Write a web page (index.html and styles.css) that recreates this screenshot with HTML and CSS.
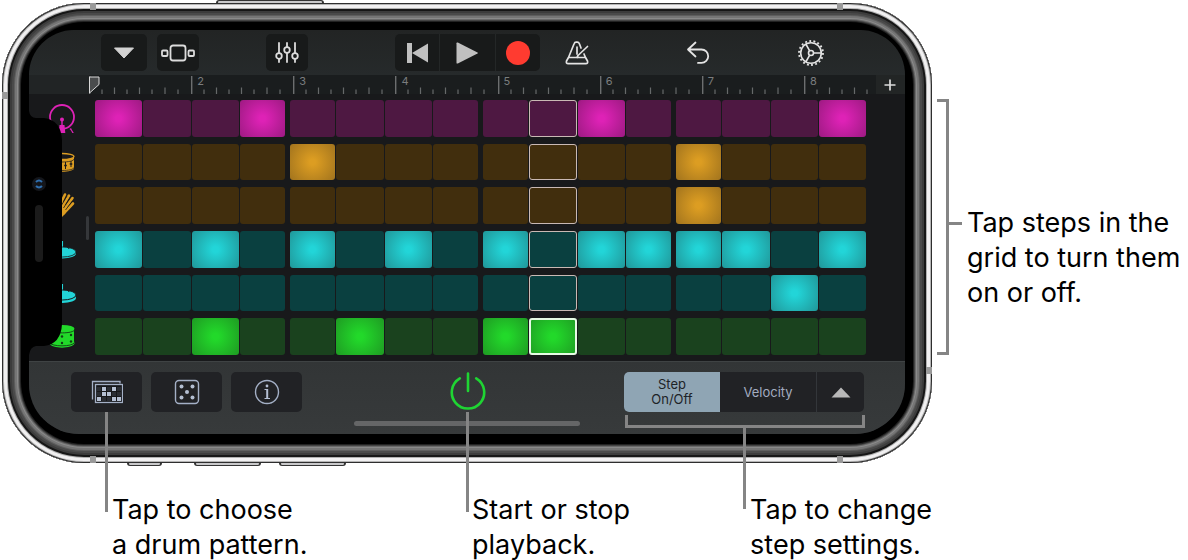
FILE: index.html
```html
<!DOCTYPE html>
<html lang="en">
<head>
    <meta charset="UTF-8">
    <meta name="viewport" content="width=device-width, initial-scale=1.0">
    <title>Beat Sequencer</title>
    <link rel="stylesheet" href="styles.css">
</head>
<body>
    <svg class="symbols" aria-hidden="true">
        <symbol id="ticks" viewBox="0 0 102 19">
            <path d="M.7 1v18" stroke="#6c6e6f" stroke-width="1.4"/>
            <path d="M13 14.500v4.500M38 14.500v4.500M63 14.500v4.500M89 14.500v4.500M25.500 12.500v6.500M50.500 12.500v6.500M76 12.500v6.500" stroke="#66696a" stroke-width="1.200"/>
        </symbol>
    </svg>

    <main class="figure">
        <div class="phone">
            <span class="side-key key-power"></span>
            <span class="side-key key-mute"></span>
            <span class="side-key key-up"></span>
            <span class="side-key key-down"></span>
            <span class="band band-tl"></span>
            <span class="band band-tr"></span>
            <span class="band band-bl"></span>
            <span class="band band-br"></span>
            <span class="band band-left"></span>
            <span class="band band-right"></span>

            <div class="screen">
                <header class="toolbar">
                    <button class="tool wide" aria-label="Navigation">
                        <svg width="22" height="12" viewBox="0 0 22 12"><path d="M1.500 1h19L11 11z" fill="#d2d2d2" stroke="#d2d2d2" stroke-linejoin="round"/></svg>
                    </button>
                    <button class="tool second" aria-label="Browser">
                        <svg width="34" height="18" viewBox="0 0 34 18" fill="none" stroke="#dcdcdc" stroke-width="1.800"><rect x="9.500" y="1.500" width="15" height="15" rx="2.500"/><rect x="1" y="6.500" width="5.500" height="5.500" rx="1"/><rect x="27.500" y="6.500" width="5.500" height="5.500" rx="1"/></svg>
                    </button>
                    <span class="gap-a"></span>
                    <button class="tool" aria-label="Track controls">
                        <svg width="26" height="22" viewBox="0 0 26 22" fill="none" stroke="#dcdcdc" stroke-width="1.800" stroke-linecap="round"><path d="M5 1v10M5 17v3M13 1v4M13 11v9M21 1v10M21 17v3"/><circle cx="5" cy="14" r="2.800"/><circle cx="13" cy="8" r="2.800"/><circle cx="21" cy="14" r="2.800"/></svg>
                    </button>
                    <span class="gap-b"></span>
                    <div class="transport">
                        <button aria-label="Go to beginning">
                            <svg width="24" height="22" viewBox="0 0 24 22" fill="#c0c0c0"><path d="M2 1h5v20H2zM23 1.500v19L7 11z"/></svg>
                        </button>
                        <button class="play" aria-label="Play">
                            <svg width="22" height="22" viewBox="0 0 22 22" fill="#c0c0c0"><path d="M.5 1.300Q.5 0 1.800.6L21.500 10.500q.8.500 0 1L1.800 21.400Q.5 22 .5 20.700z"/></svg>
                        </button>
                        <button aria-label="Record">
                            <svg width="24" height="24" viewBox="0 0 24 24"><circle cx="12" cy="12" r="12" fill="#ff3b30"/></svg>
                        </button>
                    </div>
                    <span class="gap-c"></span>
                    <button class="tool plain" aria-label="Metronome">
                        <svg width="24" height="24" viewBox="0 0 24 24" fill="none" stroke="#e4e4e4" stroke-width="1.700" stroke-linecap="round" stroke-linejoin="round"><path d="M16 7l-1.500-4q-.7-1.800-2.300-1.800h-1Q9.600 1.200 9 3L3.500 16.500 1.500 20q-.7 2.700 1.700 2.700h17.600q2.400 0 1.700-2.700l-2-3.500-1.500-3.500M3.500 16.500h17M12 6v7M22.500 5.500 13 14.500l-1 2"/></svg>
                    </button>
                    <span class="gap-d"></span>
                    <button class="tool plain" aria-label="Undo">
                        <svg width="24" height="24" viewBox="0 0 24 24" fill="none" stroke="#e4e4e4" stroke-width="1.800" stroke-linecap="round" stroke-linejoin="round"><path d="M9.500 1.500 2 8.500l7.500 7M2 8.500h13.500a6.700 6.700 0 0 1 0 13.400H12"/></svg>
                    </button>
                    <span class="gap-e"></span>
                    <button class="tool plain" aria-label="Settings">
                        <svg width="28" height="28" viewBox="0 0 28 28" fill="none" stroke="#e4e4e4" stroke-width="1.600"><circle cx="14" cy="14" r="10.300"/><circle cx="14" cy="14" r="12" stroke-width="1.800" stroke-dasharray="1.900 2.288"/><circle cx="14" cy="14" r="2.500"/><path d="M16.500 14h8M12.700 11.800 8.800 5M12.700 16.200 8.800 23"/></svg>
                    </button>
                </header>

                <div class="ruler">
                    <div class="bar">
                        <svg class="playhead" width="11" height="18" viewBox="0 0 11 18"><path d="M.5 1h9.500v7.500L.5 17z" fill="#4a4c4d" stroke="#d8d8d8"/></svg>
                        <svg class="ticks"><use href="#ticks" width="102" height="19"/></svg>
                    </div>
                    <div class="bar"><svg class="ticks"><use href="#ticks" width="102" height="19"/></svg><span>2</span></div>
                    <div class="bar"><svg class="ticks"><use href="#ticks" width="102" height="19"/></svg><span>3</span></div>
                    <div class="bar"><svg class="ticks"><use href="#ticks" width="102" height="19"/></svg><span>4</span></div>
                    <div class="bar"><svg class="ticks"><use href="#ticks" width="102" height="19"/></svg><span>5</span></div>
                    <div class="bar"><svg class="ticks"><use href="#ticks" width="102" height="19"/></svg><span>6</span></div>
                    <div class="bar"><svg class="ticks"><use href="#ticks" width="102" height="19"/></svg><span>7</span></div>
                    <div class="bar last"><svg class="ticks"><use href="#ticks" width="102" height="19"/></svg><span>8</span></div>
                    <button class="add" aria-label="Add section">
                        <svg width="12" height="12" viewBox="0 0 12 12" stroke="#dcdcdc" stroke-width="1.700"><path d="M6 .5v11M.5 6h11"/></svg>
                    </button>
                </div>

                <section class="sequencer">
                    <div class="row kick" data-steps="x..x......x....x">
                        <svg class="drum" viewBox="0 0 28 37"><circle cx="13" cy="17" r="12" fill="none" stroke="currentColor" stroke-width="1.800"/><g fill="currentColor"><circle cx="13" cy="19.500" r="2"/><path d="M12.300 20h1.400v5h1.800l.8 8H9.700l.8-8h1.800z"/><path d="m20.500 29 1.500-1 1 2 1.800 3h-1.500l-1.300-2.500z"/><path d="m5.500 29-1.500-1-1 2-1.800 3h1.500L4 30.500z"/></g></svg>
                    </div>
                    <div class="row gold" data-steps="....x.......x...">
                        <svg class="drum" viewBox="0 0 28 37"><path d="M1 12v12c0 5 24 5 24 0V12z" fill="currentColor"/><ellipse cx="13" cy="12.500" rx="12" ry="3" fill="#18191b" stroke="currentColor" stroke-width="1.300"/><path d="M1 15c0 4 24 4 24 0M1 23.500c0 4 24 4 24 0" fill="none" stroke="#18191b" stroke-width=".7"/><path d="M7 18v8M16.500 18v7M22 17v6" stroke="#18191b"/><path d="M15.200 21.500h2.600M20.700 20h2.600" stroke="#18191b" stroke-width="1.600"/></svg>
                    </div>
                    <div class="row gold" data-steps="............x...">
                        <svg class="drum" viewBox="0 0 28 37"><g stroke="currentColor" stroke-width="2.600" stroke-linecap="round" fill="none"><path d="m10 20 6-12.500M12 22l8-13.500M14 24l9.500-13M15 26l9-9.500M7 18V9"/></g><path d="M8 15l5-1 6 7-3 6-4 4-5-4z" fill="currentColor"/><path d="m12 19 6-10M14.500 21l7-11M16.500 23l7-9" stroke="#18191b" stroke-width=".8"/></svg>
                    </div>
                    <div class="row teal" data-steps="x.x.x.x.x.xxxx.x">
                        <svg class="drum" viewBox="0 0 28 37"><path d="M13.300 10v8" stroke="currentColor" stroke-width="1.500"/><ellipse cx="13.500" cy="22.500" rx="13.500" ry="5" fill="currentColor"/><ellipse cx="13.500" cy="21" rx="13.500" ry="5" fill="currentColor" stroke="#18191b" stroke-width=".8"/><path d="m18 16 2 1.500 1-1" fill="none" stroke="#18191b"/></svg>
                    </div>
                    <div class="row teal" data-steps="..............x.">
                        <svg class="drum" viewBox="0 0 28 37"><path d="M13.300 9v8" stroke="currentColor" stroke-width="1.500"/><ellipse cx="13.500" cy="23" rx="13.500" ry="5" fill="currentColor"/><ellipse cx="13.500" cy="20" rx="13.500" ry="5" fill="currentColor" stroke="#18191b"/><path d="m18 15 2 1.500 1-1" fill="none" stroke="#18191b"/></svg>
                    </div>
                    <div class="row green" data-steps="..x..x..xx......">
                        <svg class="drum" viewBox="0 0 28 37"><path d="M2 11v12L.5 25.500c2 5.500 23 5.500 25 0L25 23V11z" fill="currentColor"/><ellipse cx="13.500" cy="10.500" rx="12" ry="3.500" fill="currentColor"/><path d="M1.500 11.500c0 4.500 24 4.500 24 0M.5 24.500c2 4.500 23 4.500 25 0" fill="none" stroke="#134d16"/><g fill="#123d15"><circle cx="13" cy="18.500" r="1.200"/><circle cx="13" cy="25" r="1.200"/><circle cx="22" cy="17" r="1.200"/><circle cx="22" cy="23.500" r="1.200"/><circle cx="5" cy="18" r="1.200"/></g></svg>
                    </div>
                    <span class="handle"></span>
                    <svg class="notch" width="34" height="244" viewBox="0 0 34 244"><path d="M0 0q1 7 7 7h8q17 2 18 22v184q-1 20-18 22H7q-6 1-7 9z" fill="#000"/><circle cx="10" cy="73" r="7" fill="#14161b"/><path d="M7 71q3-3 6 0M7 75q3 3 6 0" stroke="#2f6faf" stroke-width="2" fill="none"/><rect x="6" y="94" width="8" height="57" rx="4" fill="#1b1b1b"/></svg>
                </section>

                <footer class="controls">
                    <div class="buttons">
                        <button class="control" aria-label="Patterns">
                            <svg width="32" height="24" viewBox="0 0 32 24" fill="none"><path d="M1.500 19.500V1.500H29v2" stroke="#a4b0c6" stroke-width="1.300"/><path d="M4 4h28v19.500H4z" fill="#17181b"/><rect x="4.500" y="4.500" width="27" height="18" stroke="#a4b0c6" stroke-width="1.300"/><path d="M6 7h4v4H6zM16 7h4v4h-4zM26 7h4v4h-4zM6 12h4v4H6zM21 12h4v4h-4zM26 12h4v4h-4zM11 17h4v4h-4zM16 17h4v4h-4z" fill="#2a2d33"/><path d="M11 7h4v4h-4zM21 7h4v4h-4zM11 12h4v4h-4zM16 12h4v4h-4zM6 17h4v4H6zM21 17h4v4h-4zM26 17h4v4h-4z" fill="#b4bfd2"/></svg>
                            <span class="leader"></span>
                        </button>
                        <button class="control" aria-label="Randomize">
                            <svg width="26" height="26" viewBox="0 0 26 26"><rect x="1.500" y="1.500" width="23" height="23" rx="3.500" fill="none" stroke="#a4b0c6" stroke-width="1.400"/><g fill="#b4bfd2"><circle cx="7.500" cy="7.500" r="2"/><circle cx="18.500" cy="7.500" r="2"/><circle cx="13" cy="13" r="2"/><circle cx="7.500" cy="18.500" r="2"/><circle cx="18.500" cy="18.500" r="2"/></g></svg>
                        </button>
                        <button class="control" aria-label="Info">
                            <svg width="26" height="26" viewBox="0 0 26 26"><circle cx="13" cy="13" r="11.500" fill="none" stroke="#a4b0c6" stroke-width="1.400"/><circle cx="13" cy="7" r="1.400" fill="#b4bfd2"/><path d="M10.500 10.500h3M10.500 19.500h5.500" fill="none" stroke="#b4bfd2"/><path d="M13.200 10v9.500" stroke="#b4bfd2" stroke-width="2"/></svg>
                        </button>
                    </div>
                    <button class="power" aria-label="Start or stop">
                        <svg width="36" height="40" viewBox="0 0 36 40" fill="none" stroke="#1fd433" stroke-width="2.600" stroke-linecap="round"><path d="M18 1.500v17.500M9.800 6.400a16.200 16.200 0 1 0 16.400 0"/></svg>
                        <span class="leader"></span>
                    </button>
                    <div class="modes">
                        <button class="active">Step<br>On/Off</button>
                        <button>Velocity</button>
                        <button class="more" aria-label="More step settings">
                            <svg width="20" height="11" viewBox="0 0 20 11"><path d="M10 .5 19.500 10.500H.5z" fill="#b8b8b8"/></svg>
                        </button>
                        <span class="bracket-below"></span>
                    </div>
                    <span class="home-bar"></span>
                </footer>
            </div>
        </div>

        <div class="side-note">
            <span class="bracket"></span>
            <span class="dash"></span>
            <p>Tap steps in the<br>grid to turn them<br>on or off.</p>
        </div>

        <div class="captions">
            <p>Tap to choose<br>a drum pattern.</p>
            <p>Start or stop<br>playback.</p>
            <p>Tap to change<br>step settings.</p>
        </div>
    </main>

    <script src="script.js"></script>
</body>
</html>
```

FILE: styles.css
```css
* {
    box-sizing: border-box;
}
body {
    margin: 0;
    background: #fff;
    color: #000;
    font-family: Inter, "Liberation Sans", sans-serif;
}
button {
    display: flex;
    align-items: center;
    justify-content: center;
    padding: 0;
    border: none;
    background: none;
    color: inherit;
    font-family: inherit;
    cursor: pointer;
}
svg {
    display: block;
    flex: none;
}
p {
    margin: 0;
    font-size: 27px;
    line-height: 35px;
    white-space: nowrap;
}
.symbols {
    position: absolute;
    width: 0;
    height: 0;
}
.figure {
    display: grid;
    grid-template-columns: minmax(0, 1fr) 256px;
}

/* phone body, drawn as rings from the outside in */
.phone {
    position: relative;
    margin: 3px 0 0 2px;
    padding: 27px 27px 29px;
    border-radius: 82px;
    background: #000;
    box-shadow:
        inset 0 0 0 1px #2e2e2e,
        inset 0 0 0 2px #b5b5b5,
        inset 0 0 0 5px #f1f0f1,
        inset 0 0 0 6px #b0b0b0,
        inset 0 0 0 8px #161616,
        inset 0 0 0 10px #3c3c3c,
        inset 0 0 0 12px #4a4a4a,
        inset 0 0 0 13px #5e5e5e,
        inset 0 0 0 15px #767676,
        inset 0 0 0 16px #8a8a8a,
        inset 0 0 0 17px #6a6a6a,
        inset 0 0 0 18px #444,
        inset 0 0 0 19px #222;
}
.side-key {
    position: absolute;
    top: 100%;
    height: 3px;
    background: #c9c9cb;
    border: solid #333;
    border-width: 0 2px 1px;
    border-radius: 0 0 3px 3px;
}
.key-power {
    top: -3px;
    left: 214px;
    width: 108px;
    border-width: 1px 2px 0;
    border-radius: 3px 3px 0 0;
}
.key-mute {
    left: 125px;
    width: 35px;
}
.key-up {
    left: 192px;
    width: 67px;
}
.key-down {
    left: 277px;
    width: 67px;
}
.band {
    position: absolute;
    width: 6px;
    height: 7px;
    background: #999;
}
.band-tl {
    top: 0;
    left: 88px;
}
.band-tr {
    top: 0;
    right: 89px;
}
.band-bl {
    bottom: 0;
    left: 88px;
}
.band-br {
    bottom: 0;
    right: 89px;
}
.band-left {
    top: 89px;
    left: 0;
}
.band-right {
    bottom: 89px;
    right: 0;
}

.screen {
    border-radius: 50px;
    background: #18191b;
}

/* toolbar */
.toolbar {
    display: flex;
    align-items: center;
    height: 45px;
    padding: 0 75px 0 72px;
    border-radius: 50px 50px 0 0;
    background: linear-gradient(#222424, #262a2b);
}
.tool {
    width: 42px;
    height: 37px;
    border-radius: 5px;
    background: #181a1a;
}
.tool.wide {
    width: 46px;
}
.tool.second {
    margin-left: 10px;
}
.tool.plain {
    width: 38px;
    background: none;
}
.gap-a {
    flex: 67;
}
.gap-b {
    flex: 87;
}
.gap-c {
    flex: 19;
}
.gap-d {
    flex: 83;
}
.gap-e {
    flex: 75;
}
.transport {
    display: grid;
    grid-template-columns: 44px 55px 44px;
    gap: 1px;
    height: 37px;
    border-radius: 5px;
    background: #242727;
    overflow: hidden;
}
.transport button {
    background: #181a1a;
}

/* ruler */
.ruler {
    display: flex;
    height: 19px;
    padding-left: 60px;
    background: linear-gradient(90deg, #212425 60px, #1a1d1e 60px);
}
.bar {
    position: relative;
    flex: 102;
    min-width: 0;
    overflow: hidden;
}
.bar.last {
    flex: 70;
}
.bar .ticks {
    width: 100%;
    height: 19px;
}
.bar span {
    position: absolute;
    top: 0;
    left: 6px;
    color: #7b7d7e;
    font-size: 11px;
    line-height: 13px;
}
.playhead {
    position: absolute;
    top: 1px;
    left: 0;
}
.add {
    width: 29px;
    margin-left: 2px;
    background: #222525;
}

/* step grid */
.sequencer {
    position: relative;
    display: grid;
    grid-template-rows: repeat(6, minmax(0, 1fr));
    gap: 7px;
    height: 267px;
    padding: 6px 39px 6px 20px;
}
.row {
    display: flex;
    gap: 18px;
}
.drum {
    width: 28px;
    height: 37px;
    color: var(--lit);
}
.steps {
    flex: 1;
    display: grid;
    grid-template-columns: repeat(16, 1fr);
    gap: 1px;
}
.step {
    appearance: none;
    margin: 0;
    border-radius: 3px;
    background: var(--off);
    cursor: pointer;
}
.step:nth-child(4n):not(:last-child) {
    margin-right: 2px;
}
.step:nth-child(4n + 1):not(:first-child) {
    margin-left: 2px;
}
.step:checked {
    background: radial-gradient(circle, var(--lit) 10%, var(--edge) 110%);
}
.step.current {
    border: 1px solid #c9b9b4;
}
.step.current:checked {
    border: 2px solid #e6fbe4;
    background-origin: border-box;
}
.kick {
    --lit: #de22b6;
    --edge: #96197c;
    --off: #4e1842;
}
.gold {
    --lit: #dc9d22;
    --edge: #9b6f1d;
    --off: #412e0d;
}
.teal {
    --lit: #22d5d8;
    --edge: #209092;
    --off: #0a4040;
}
.green {
    --lit: #22d92a;
    --edge: #1e9422;
    --off: #1a421e;
}
.handle {
    position: absolute;
    top: 122px;
    left: 57px;
    width: 3px;
    height: 24px;
    border-radius: 2px;
    background: #35373a;
}
.notch {
    position: absolute;
    top: 17px;
    left: 0;
}

/* bottom controls */
.controls {
    position: relative;
    display: grid;
    grid-template-columns: 1fr auto 1fr;
    align-items: start;
    height: 73px;
    padding: 10px 41px 0 42px;
    border-top: 1px solid #3f4344;
    border-radius: 0 0 50px 50px;
    background: linear-gradient(#323536, #373a3b);
}
.buttons {
    display: flex;
    gap: 9px;
}
.control {
    position: relative;
    width: 71px;
    height: 40px;
    border-radius: 5px;
    background: #212225;
}
.power {
    position: relative;
    height: 40px;
}
.modes {
    position: relative;
    display: flex;
    justify-self: end;
    height: 40px;
    border-radius: 5px;
    background: #212225;
    color: #a3acc0;
}
.modes button {
    width: 96px;
    font-size: 13px;
    line-height: 15px;
}
.modes .active {
    border-radius: 5px 0 0 5px;
    background: #8fa5b4;
    color: #1d2327;
}
.modes .more {
    width: 48px;
    border-left: 1px solid #33363a;
}
.home-bar {
    position: absolute;
    bottom: 8px;
    left: 50%;
    width: 226px;
    height: 5px;
    border-radius: 3px;
    background: #656667;
    transform: translateX(-50%);
}

/* callouts */
.leader {
    position: absolute;
    z-index: 1;
    top: 100%;
    left: 50%;
    width: 3px;
    height: 100px;
    margin-left: -2px;
    background: #858585;
}
.bracket-below {
    position: absolute;
    top: 43px;
    left: 1px;
    right: -1px;
    height: 13px;
    border: solid #858585;
    border-width: 0 3px 3px;
}
.bracket-below::after {
    content: "";
    position: absolute;
    z-index: 1;
    top: 100%;
    left: 50%;
    width: 3px;
    height: 84px;
    margin-left: -2px;
    background: #858585;
}
.side-note {
    display: flex;
    align-items: flex-start;
    padding: 99px 0 0 5px;
}
.bracket {
    width: 12px;
    height: 256px;
    border: solid #858585;
    border-width: 3px 3px 3px 0;
}
.dash {
    width: 13px;
    height: 3px;
    margin-top: 123px;
    background: #858585;
}
.side-note p {
    margin: 106px 0 0 5px;
}
.captions {
    display: grid;
    grid-template-columns: 360fr 278fr 181fr;
    padding: 29px 0 0 112px;
}
```

FILE: script.js
```js
// fill every row with its sixteen steps
document.querySelectorAll('.row').forEach((row, rowIndex) => {
    const steps = document.createElement('div');
    steps.className = 'steps';

    [...row.dataset.steps].forEach((mark, i) => {
        const step = document.createElement('input');
        step.type = 'checkbox';
        step.className = i === 9 ? 'step current' : 'step';
        step.checked = mark === 'x';
        step.setAttribute('aria-label', `Row ${rowIndex + 1}, step ${i + 1}`);
        steps.appendChild(step);
    });

    row.appendChild(steps);
});
```
